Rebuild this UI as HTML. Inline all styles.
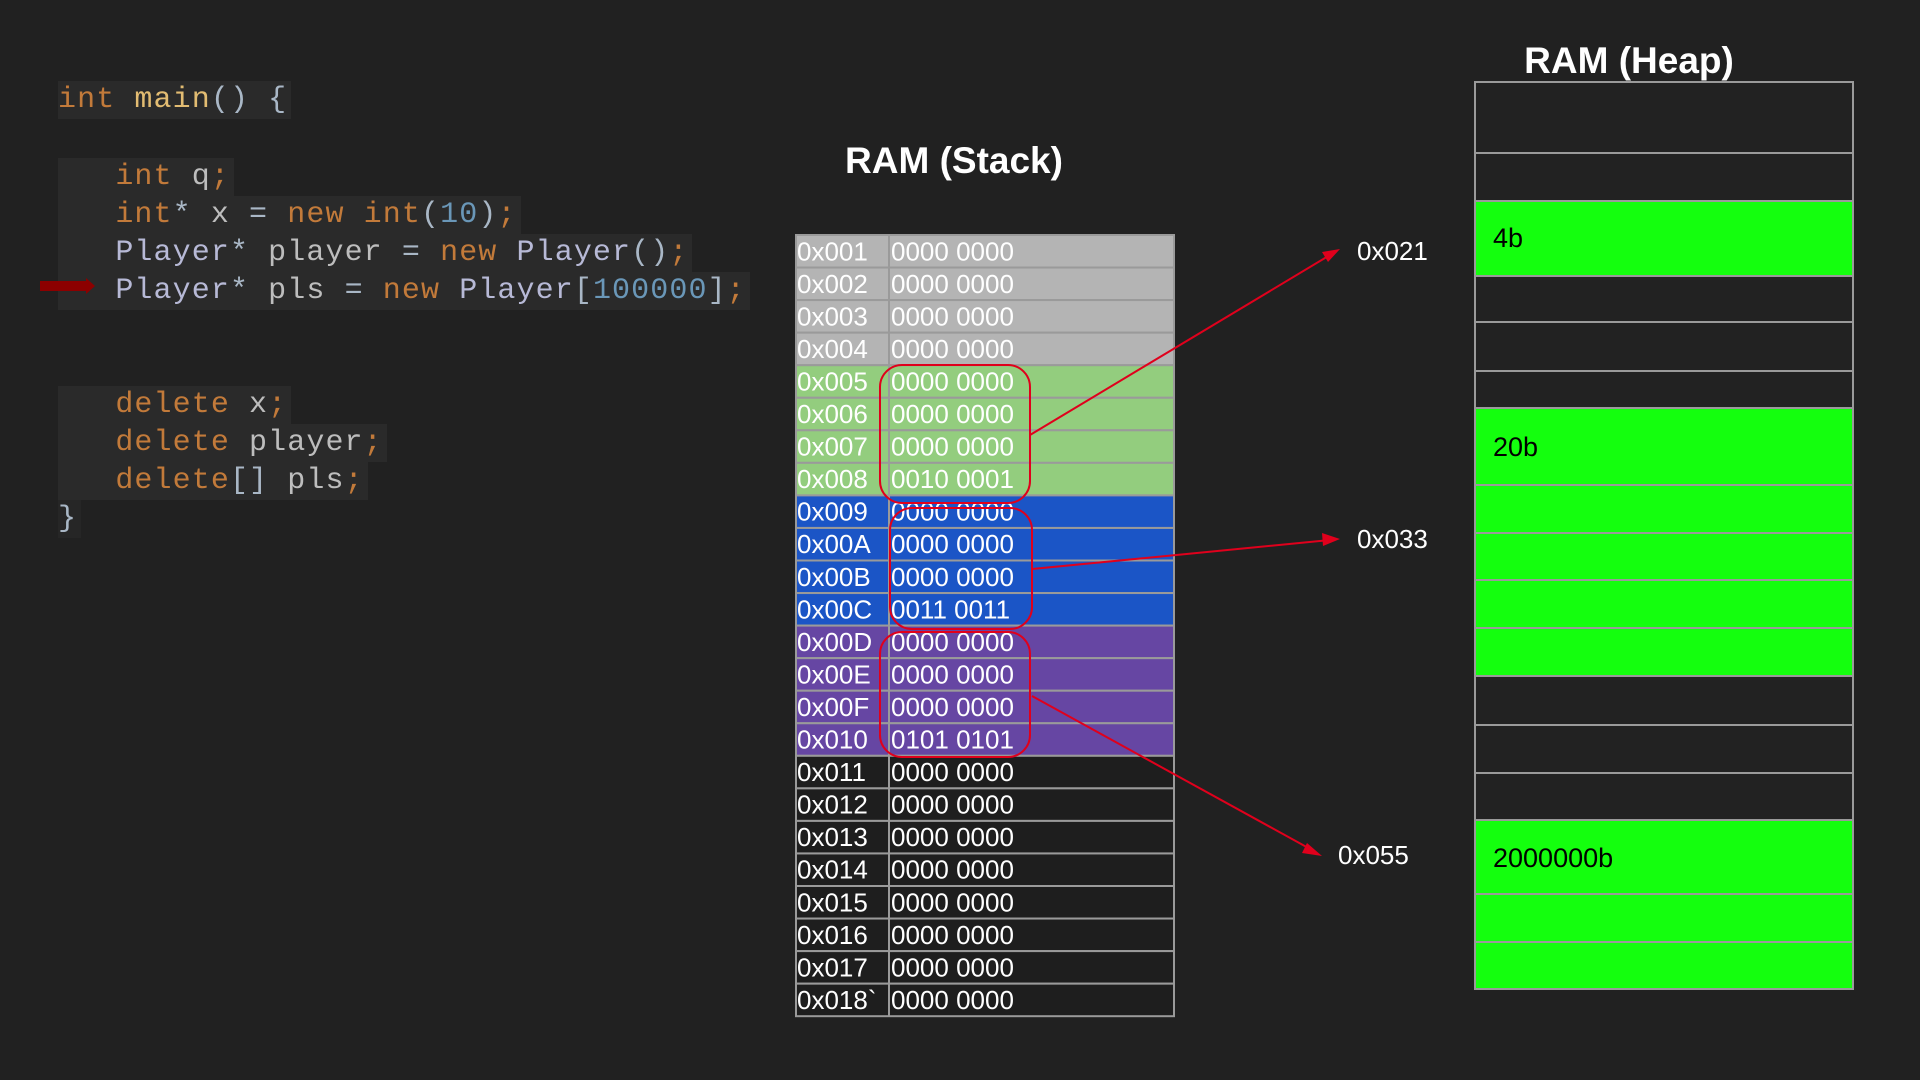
<!DOCTYPE html>
<html><head><meta charset="utf-8"><style>
html,body{margin:0;padding:0;background:#212121;width:1920px;height:1080px;overflow:hidden}
.code{position:absolute;left:0;top:3px;font-family:"Liberation Mono",monospace;font-size:30px;letter-spacing:1.1px;color:#a9b7c6}
.ln{position:absolute;left:58px;height:38px;line-height:38px;background:#2a2a2a;white-space:pre;padding-right:4px}
.k{color:#c27a3a}.f{color:#e2bc72}.n{color:#6a97b8}.t{color:#b7b9d6}.v{color:#bdbdbd}
svg{position:absolute;left:0;top:0}
</style></head><body>
<div class="code">
<div class="ln" style="top:78px;"><span class="k">int</span> <span class="f">main</span>() {</div>
<div class="ln" style="top:155px;">   <span class="k">int</span> <span class="v">q</span><span class="k">;</span></div>
<div class="ln" style="top:193px;">   <span class="k">int</span>* <span class="v">x</span> = <span class="k">new int</span>(<span class="n">10</span>)<span class="k">;</span></div>
<div class="ln" style="top:231px;">   <span class="t">Player</span>* <span class="v">player</span> = <span class="k">new</span> <span class="t">Player</span>()<span class="k">;</span></div>
<div class="ln" style="top:269px;">   <span class="t">Player</span>* <span class="v">pls</span> = <span class="k">new</span> <span class="t">Player</span>[<span class="n">100000</span>]<span class="k">;</span></div>
<div class="ln" style="top:383px;left:58px;">   <span class="k">delete</span> <span class="v">x</span><span class="k">;</span></div>
<div class="ln" style="top:421px;">   <span class="k">delete</span> <span class="v">player</span><span class="k">;</span></div>
<div class="ln" style="top:459px;">   <span class="k">delete</span>[] <span class="v">pls</span><span class="k">;</span></div>
<div class="ln" style="top:497px;background:#262626;">}</div>
</div>
<svg width="1920" height="1080" xmlns="http://www.w3.org/2000/svg" font-family="Liberation Sans, sans-serif">
<rect x="40" y="281" width="48" height="10" fill="#8c0000"/>
<polygon points="86,278 95,286 86,294" fill="#8c0000"/>
<text x="954" y="173" font-size="37" font-weight="bold" fill="#fff" text-anchor="middle">RAM (Stack)</text>
<text x="1629" y="73" font-size="37" font-weight="bold" fill="#fff" text-anchor="middle">RAM (Heap)</text>
<g id="stack"></g>
<g id="heap"></g>
<g fill="none" stroke="#e0001c" stroke-width="2">
<rect x="880" y="365" width="150" height="138" rx="22"/>
<rect x="890" y="508" width="142" height="121" rx="22"/>
<rect x="880" y="632" width="150" height="125" rx="22"/>
<line x1="1030" y1="435" x2="1330" y2="255"/>
<line x1="1032" y1="569" x2="1330" y2="540"/>
<line x1="1032" y1="696" x2="1312" y2="850"/>
</g>
<g fill="#e0001c">
<polygon points="1340,249 1322,252 1328,262"/>
<polygon points="1340,539 1322,533 1323,546"/>
<polygon points="1322,856 1307,843 1302,853"/>
</g>
<g font-size="26" fill="#fff">
<text x="1357" y="260">0x021</text>
<text x="1357" y="548">0x033</text>
<text x="1338" y="864">0x055</text>
</g>
</svg>
<script>
(function(){
var ns="http://www.w3.org/2000/svg";
function el(p,t,a,txt){var e=document.createElementNS(ns,t);for(var k in a)e.setAttribute(k,a[k]);if(txt)e.textContent=txt;p.appendChild(e);return e;}
var g=document.getElementById("stack");
var addrs=["0x001","0x002","0x003","0x004","0x005","0x006","0x007","0x008","0x009","0x00A","0x00B","0x00C","0x00D","0x00E","0x00F","0x010","0x011","0x012","0x013","0x014","0x015","0x016","0x017","0x018`"];
var vals=["0000 0000","0000 0000","0000 0000","0000 0000","0000 0000","0000 0000","0000 0000","0010 0001","0000 0000","0000 0000","0000 0000","0011 0011","0000 0000","0000 0000","0000 0000","0101 0101","0000 0000","0000 0000","0000 0000","0000 0000","0000 0000","0000 0000","0000 0000","0000 0000"];
var top=235,h=32.55,L=796,R=1174,D=889;
for(var i=0;i<24;i++){
 var c=i<4?"#b4b4b4":i<8?"#93cd7e":i<12?"#1b55c6":i<16?"#6646a3":"#1e1e1e";
 var y=top+i*h;
 el(g,"rect",{x:L,y:y,width:R-L,height:h,fill:c,stroke:"#9a9a9a","stroke-width":2});
 el(g,"line",{x1:D,y1:y,x2:D,y2:y+h,stroke:"#9a9a9a","stroke-width":2});
 el(g,"text",{x:797,y:y+h/2+9,"font-size":26,fill:"#fff"},addrs[i]);
 el(g,"text",{x:891,y:y+h/2+9,"font-size":26,fill:"#fff"},vals[i]);
}
var hg=document.getElementById("heap");
var ys=[82,153,201,276,322,371,408,485,533,580,628,676,725,773,820,894,942,989];
for(var j=0;j<ys.length-1;j++){
 var y0=ys[j],y1=ys[j+1];
 var green=(y0>=201&&y0<276)||(y0>=408&&y0<676)||(y0>=820);
 el(hg,"rect",{x:1475,y:y0,width:378,height:y1-y0,fill:green?"#14ff0e":"#222",stroke:"#9a9a9a","stroke-width":2});
}
el(hg,"text",{x:1493,y:247,"font-size":27,fill:"#000"},"4b");
el(hg,"text",{x:1493,y:456,"font-size":27,fill:"#000"},"20b");
el(hg,"text",{x:1493,y:867,"font-size":27,fill:"#000"},"2000000b");
})();
</script>
</body></html>
